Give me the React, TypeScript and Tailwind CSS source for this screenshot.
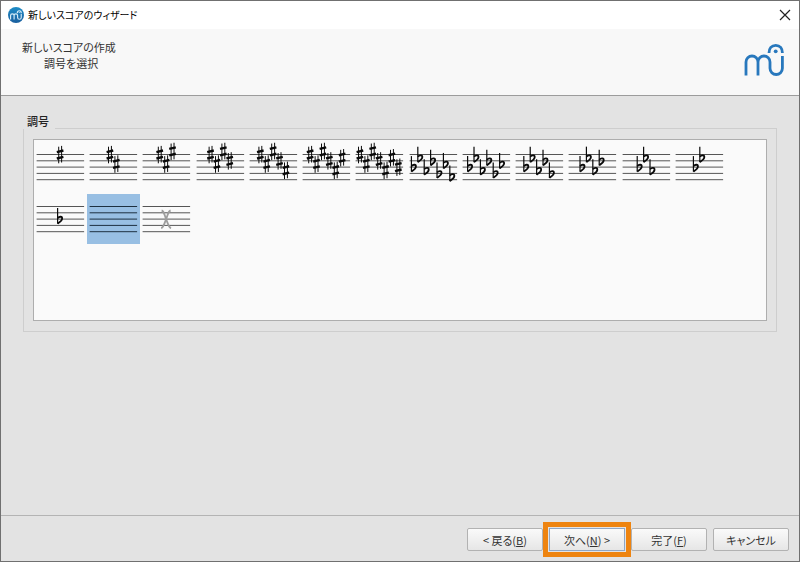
import React from 'react';
import { clsx } from 'clsx';

type Kind = 'sharp' | 'flat' | 'none' | 'atonal';

interface KeySignature {
  kind: Kind;
  count: number;
  label: string;
}

// Distance from the top staff line, in half spaces
const SHARP_STEPS = [0, 3, -1, 2, 5, 1, 4];
const FLAT_STEPS = [4, 1, 5, 2, 6, 3, 7];

const STAFF_TOP = 12.5;
const STAFF_SPACE = 6.3;
const ACCIDENTAL_STEP = 6.4;

const KEY_SIGNATURES: KeySignature[] = [
  ...[1, 2, 3, 4, 5, 6, 7].map((n) => ({ kind: 'sharp' as const, count: n, label: `♯ × ${n}` })),
  ...[7, 6, 5, 4, 3, 2, 1].map((n) => ({ kind: 'flat' as const, count: n, label: `♭ × ${n}` })),
  { kind: 'none', count: 0, label: 'ハ長調 / イ短調' },
  { kind: 'atonal', count: 0, label: '無調' },
];

const Sharp = () => (
  <g stroke="#0a0a0a" fill="none">
    <path d="M-1.4 -7.8V8.8M1.5 -8.6V8" strokeWidth="1" />
    <path d="M-3.3 -2.4L3.3 -4M-3.3 4L3.3 2.4" strokeWidth="2.4" />
  </g>
);

const Flat = () => (
  <g stroke="#0a0a0a" fill="none">
    <path d="M-2.5 -11V4.6" strokeWidth="1.2" />
    <path d="M-2.5 -1C-0.6 -3 2.2 -2.8 2 -0.4C1.9 1.8 -0.3 3 -2.5 4.4" strokeWidth="1.8" />
  </g>
);

const Staff: React.FC<{ signature: KeySignature }> = ({ signature }) => {
  const { kind, count } = signature;
  const steps = kind === 'sharp' ? SHARP_STEPS : FLAT_STEPS;
  const left = 26 - ((count - 1) * ACCIDENTAL_STEP) / 2;

  return (
    <svg viewBox="0 0 53 50" className="block h-[50px] w-full" aria-hidden="true">
      {[0, 1, 2, 3, 4].map((line) => (
        <path
          key={line}
          d={`M2.5 ${STAFF_TOP + line * STAFF_SPACE}H50`}
          stroke={kind === 'none' ? '#1d3040' : '#555'}
          strokeWidth="1"
        />
      ))}
      {steps.slice(0, count).map((step, i) => (
        <g
          key={i}
          transform={`translate(${left + i * ACCIDENTAL_STEP} ${STAFF_TOP + (step * STAFF_SPACE) / 2})`}
        >
          {kind === 'sharp' ? <Sharp /> : <Flat />}
        </g>
      ))}
      {kind === 'atonal' && (
        <g stroke="#9d9d9d" fill="none" strokeWidth="1.8">
          <path d="M21.5 16.5C24 17 24 20 26 25C28 30 28.5 33.500 31 34" />
          <path d="M30.500 16.500C28 17 28 20 26 25C24 30 23.500 33.500 21 34" />
        </g>
      )}
    </svg>
  );
};

const MuLogo: React.FC<{ className: string; strokeWidth: number }> = ({ className, strokeWidth }) => (
  <svg viewBox="0 0 41 34" className={className} fill="none" stroke="currentColor" strokeWidth={strokeWidth} aria-hidden="true">
    <path d="M2 32.500V19a6 6 0 0 1 12 0V32.500M14 19a6 6 0 0 1 12 0V25.300a6.200 6.200 0 0 0 12.400 0V13" />
    <path d="M25 10C25 5.500 27.500 2.400 31.800 2.400C36 2.400 38.400 5.500 38.400 10" />
    <circle cx="31.700" cy="8.300" r="1.900" fill="currentColor" stroke="none" />
  </svg>
);

interface WizardButtonProps {
  children: React.ReactNode;
  highlighted?: boolean;
}

const WizardButton: React.FC<WizardButtonProps> = ({ children, highlighted }) => (
  <button
    type="button"
    className={clsx(
      'h-[23px] w-[76px] border bg-linear-to-b from-[#fafafa] to-[#e6e6e6] text-center text-[11px] leading-4 whitespace-nowrap text-[#333]',
      highlighted
        ? 'border-[#8fa6c4] outline-5 outline-offset-1 outline-[#ee8410]'
        : 'rounded-[2px] border-[#b2b2b2]'
    )}
  >
    {children}
  </button>
);

export default function App() {
  const [selected, setSelected] = React.useState(14);

  return (
    <div className="flex min-h-screen flex-col border border-[#707070] bg-[#e3e3e3] font-['Noto_Sans_CJK_JP',sans-serif] text-[11px] leading-4 text-[#222] [font-feature-settings:'palt']">
      {/* Title bar */}
      <div className="flex h-7 shrink-0 items-center justify-between bg-white pr-2 pl-[7px]">
        <div className="flex items-center gap-1">
          <div className="flex size-4 items-center justify-center rounded-full bg-linear-to-b from-[#1d8cc6] to-[#1a5f9e] text-[#d5ebf7]">
            <MuLogo className="h-2.5 w-3" strokeWidth={4} />
          </div>
          <h1 className="text-[10px] text-black">新しいスコアのウィザード</h1>
        </div>
        <button type="button" aria-label="閉じる" className="text-[#222]">
          <svg viewBox="0 0 12 12" className="size-3" fill="none" stroke="currentColor" strokeWidth="1.200">
            <path d="M1 1L11 11M11 1L1 11" />
          </svg>
        </button>
      </div>

      {/* Page header */}
      <header className="flex h-[67px] shrink-0 items-start justify-between border-b border-[#9c9c9c] bg-[#f8f8f8] pt-2.5 pr-3.5 pl-[21px] text-[#333]">
        <div>
          <h2>新しいスコアの作成</h2>
          <p className="pl-[22px]">調号を選択</p>
        </div>
        <MuLogo className="mt-1 h-[34px] w-[41px] text-[#2878bd]" strokeWidth={2.8} />
      </header>

      {/* Key signature picker */}
      <main className="flex-1 px-[22px] pt-[17px]">
        <div className="flex items-stretch gap-1.5 pl-1">
          <h3 id="key-label" className="font-medium">調号</h3>
          <div className="flex-1 border-b border-[#cecece]" />
        </div>
        <div className="border-x border-b border-[#cecece] px-[9px] pt-2.5 pb-2.5">
          <div className="min-h-[182px] border border-[#aeaeae] bg-[#fafafa] pt-0.5">
            <div role="group" aria-labelledby="key-label" className="grid max-w-[692px] grid-cols-13 gap-y-0.5">
              {KEY_SIGNATURES.map((signature, i) => (
                <button
                  key={signature.label}
                  type="button"
                  aria-label={signature.label}
                  aria-pressed={selected === i}
                  onClick={() => setSelected(i)}
                  className={clsx(selected === i && 'bg-[#98bfe3]')}
                >
                  <Staff signature={signature} />
                </button>
              ))}
            </div>
          </div>
        </div>
      </main>

      {/* Wizard navigation */}
      <footer className="flex shrink-0 justify-end gap-1.5 border-t border-[#b4b4b4] pt-3 pr-2.5 pb-2.5">
        <WizardButton>&lt; 戻る(<u>B</u>)</WizardButton>
        <WizardButton highlighted>次へ(<u>N</u>) &gt;</WizardButton>
        <WizardButton>完了(<u>F</u>)</WizardButton>
        <WizardButton>キャンセル</WizardButton>
      </footer>
    </div>
  );
}
